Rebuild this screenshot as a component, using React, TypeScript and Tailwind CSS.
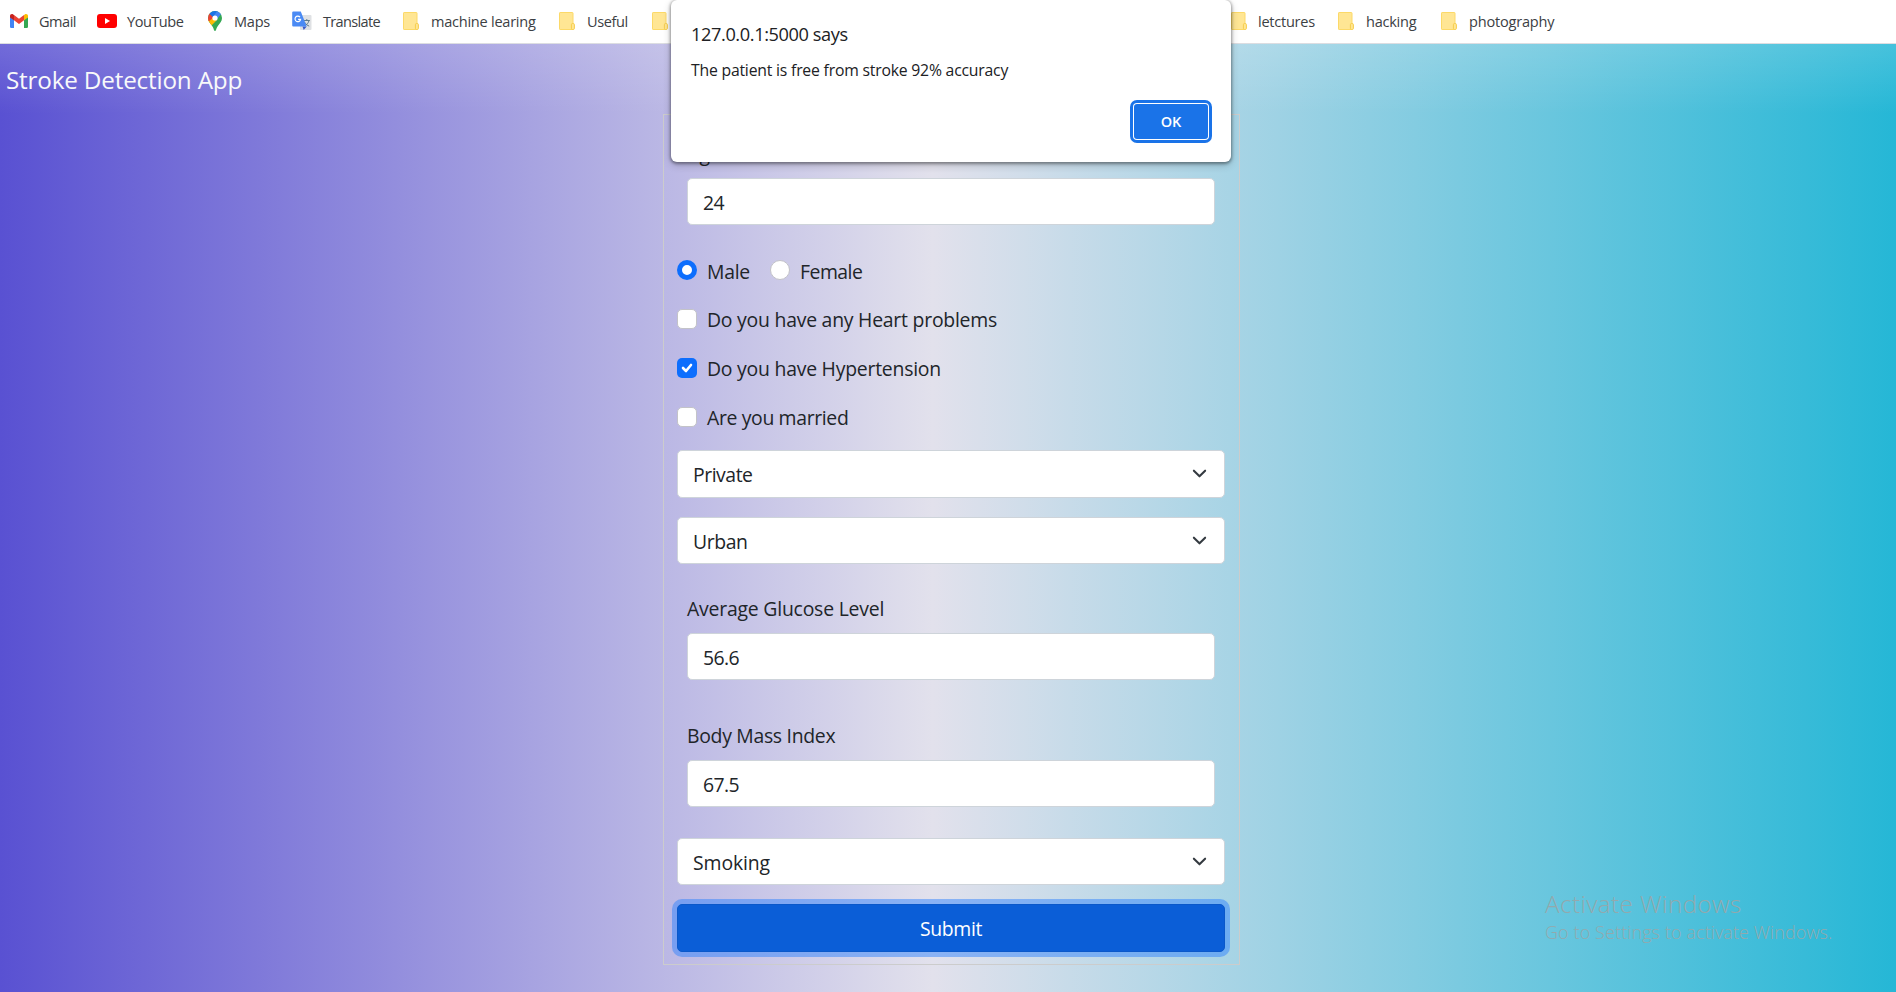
import type { ReactNode } from "react";

const GmailIcon = () => (
  <svg viewBox="0 0 18 14" className="h-[14px] w-[18px]">
    <path fill="#4285f4" d="M0 2.2 4 5.2V14H1.2A1.2 1.2 0 0 1 0 12.8Z" />
    <path fill="#34a853" d="M18 2.2 14 5.2V14h2.8a1.2 1.2 0 0 0 1.2-1.2Z" />
    <path fill="#ea4335" d="M4 1 9 4.8 14 1V6.3L9 10 4 6.3Z" />
    <path fill="#c5221f" d="M0 1.9C0 .2 1.9-.5 3.2.4L4 1V6.3L0 3.4Z" />
    <path fill="#fbbc04" d="M18 1.9C18 .2 16.1-.5 14.8.4L14 1V6.3L18 3.4Z" />
  </svg>
);

const YouTubeIcon = () => (
  <svg viewBox="0 0 20 14" className="h-[14px] w-[20px]">
    <rect width="20" height="14" rx="3" fill="#f00" />
    <path d="M8 4.1v5.8L13 7Z" fill="#fff" />
  </svg>
);

const MapsIcon = () => (
  <svg viewBox="0 0 14 20" className="h-[20px] w-[14px]">
    <defs>
      <clipPath id="pin">
        <path d="M7 0a7 7 0 0 1 7 7c0 3.3-2 5-3.8 7.4C8.6 16.600 8.300 18 7.900 19.300 7.600 20.200 6.400 20.200 6.100 19.300 5.700 18 5.400 16.600 3.800 14.400 2 12 0 10.300 0 7a7 7 0 0 1 7-7Z" />
      </clipPath>
    </defs>
    <g clipPath="url(#pin)">
      <rect width="14" height="20" fill="#34a853" />
      <path d="M-1 9 5 5 9.500 8.500 3 15Z" fill="#fbbc04" />
      <path d="M-1 10V1.500L1.700 2.500 6 6 0.800 10.500Z" fill="#ea4335" />
      <path d="M1.500 2.700 4-1h6.500L9.500 .5 4.800 6Z" fill="#1a73e8" />
      <path d="M4.800 6 10-1 15 4 12.900 3.300 8 9.500Z" fill="#4285f4" />
    </g>
    <circle cx="7" cy="7" r="2.600" fill="#fff" />
  </svg>
);

const TranslateIcon = () => (
  <svg viewBox="0 0 20 20" className="h-[20px] w-[20px]">
    <rect x="8" y="4" width="11.500" height="15" rx="1" fill="#dfe1e4" />
    <path d="M11.800 9.500h6M14.800 8v1.500M17 9.500c-.6 2.600-2.300 4.300-4 5.300M13 11.500c.9 1.900 2.600 3 4.200 3.600" stroke="#607d8b" strokeWidth="1" fill="none" />
    <path d="M10.500 15.500h4.200L11.700 19Z" fill="#3a5bc7" />
    <path d="M1.200.6h7.600l5.900 15H1.200A1 1 0 0 1 .2 14.600v-13a1 1 0 0 1 1-1Z" fill="#4a8af4" />
    <path d="M8 6.100A2.800 2.800 0 1 0 8.600 8.400H6.100" stroke="#fff" strokeWidth="1.200" fill="none" />
  </svg>
);

const FolderIcon = () => (
  <svg viewBox="0 0 16 18" className="h-[18px] w-[16px]">
    <rect x=".5" y=".5" width="13.500" height="17" rx=".6" fill="#ffe694" stroke="#fcd968" />
    <rect x="12.400" y="11.500" width="3" height="6" rx="1.200" fill="#ffe694" stroke="#f6cd4c" />
  </svg>
);

function Bookmark({ icon, gap, children, className }: { icon: ReactNode; gap: string; children?: ReactNode; className: string }) {
  return (
    <div className={`flex h-full shrink-0 items-center text-[14.55px] whitespace-nowrap text-[#3c4043] ${gap} ${className}`}>
      {icon}
      <span className="mt-px">{children}</span>
    </div>
  );
}

function Check({ checked, className, children }: { checked?: boolean; className: string; children: ReactNode }) {
  return (
    <label className="flex h-[30px] items-start gap-[10px]">
      {checked ? (
        <svg viewBox="0 0 20 20" className="size-[20px] rounded-[5px] bg-[#0d6efd]">
          <path d="m6 10 3 3 5-6" fill="none" stroke="#fff" strokeWidth="2.600" strokeLinecap="round" strokeLinejoin="round" />
        </svg>
      ) : (
        <span className="size-[20px] rounded-[5px] border border-[#c3c3c8] bg-white" />
      )}
      <span className={`-mt-[4px] leading-[30px] ${className}`}>{children}</span>
    </label>
  );
}

function Select({ className, children }: { className: string; children: ReactNode }) {
  return (
    <div className={`flex w-[548px] items-center justify-between rounded-[5px] border border-[#ced4da] bg-white pr-[17px] pl-[15px] ${className}`}>
      <span className="pt-[2px]">{children}</span>
      <svg viewBox="0 0 16 16" className="mb-px size-[15px]">
        <path d="m2 5 6 6 6-6" fill="none" stroke="#343a40" strokeWidth="2.200" strokeLinecap="round" strokeLinejoin="round" />
      </svg>
    </div>
  );
}

function Field({ label, value, className, labelClass }: { label: string; value: string; className: string; labelClass: string }) {
  return (
    <div className={`ml-[10px] w-[528px] ${className}`}>
      <div className={`h-[30px] leading-[32px] ${labelClass}`}>{label}</div>
      <div className="mt-[10px] flex h-[47px] items-center rounded-[5px] border border-[#ced4da] bg-white px-[15px] pt-[2px] tracking-[-0.55px]">{value}</div>
    </div>
  );
}

export default function App() {
  return (
    <div className="relative h-[992px] w-[1896px] overflow-hidden bg-[linear-gradient(90deg,#5951d2_0%,#e2e1ec_49.200%,#25b7d6_100%)] font-['Open_Sans','Noto_Sans',sans-serif] text-[19.4px] text-[#212529]">
      <header className="flex h-[44px] items-center border-b border-[#dcdde1] bg-white pb-px">
        <Bookmark icon={<GmailIcon />} gap="gap-[11px]" className="ml-[10px] w-[87px] tracking-[-0.5px]">Gmail</Bookmark>
        <Bookmark icon={<YouTubeIcon />} gap="gap-[10px]" className="w-[111px] tracking-[-0.5px]">YouTube</Bookmark>
        <Bookmark icon={<MapsIcon />} gap="gap-[12px]" className="w-[84px] tracking-[-0.27px]">Maps</Bookmark>
        <Bookmark icon={<TranslateIcon />} gap="gap-[11px]" className="w-[111px] tracking-[-0.67px]">Translate</Bookmark>
        <Bookmark icon={<FolderIcon />} gap="gap-[12px]" className="w-[156px] tracking-[-0.25px]">machine learing</Bookmark>
        <Bookmark icon={<FolderIcon />} gap="gap-[12px]" className="w-[93px] tracking-[-0.4px]">Useful</Bookmark>
        <Bookmark icon={<FolderIcon />} gap="gap-0" className="w-[579px]" />
        <Bookmark icon={<FolderIcon />} gap="gap-[11px]" className="w-[107px] tracking-[-0.25px]">letctures</Bookmark>
        <Bookmark icon={<FolderIcon />} gap="gap-[12px]" className="w-[103px] tracking-[-0.25px]">hacking</Bookmark>
        <Bookmark icon={<FolderIcon />} gap="gap-[12px]" className="tracking-[-0.2px]">photography</Bookmark>
      </header>

      <nav className="flex h-[70px] items-center bg-[linear-gradient(180deg,rgba(255,255,255,0.15),rgba(255,255,255,0))] pt-[2px] pl-[6px]">
        <h1 className="text-[24.25px] tracking-[-0.18px] text-[#f8f9fa]">Stroke Detection App</h1>
      </nav>

      <form className="ml-[663px] flex h-[851px] w-[577px] flex-col border border-[#cccccc] pl-[13px]">
        <Field label="Age" value="24" className="mt-[23px]" labelClass="tracking-[0.3px]" />
        <div className="mt-[35px] flex gap-[20px]">
          <label className="flex h-[30px] gap-[10px]">
            <span className="size-[20px] rounded-full border-[5.500px] border-[#0d6efd] bg-white" />
            <span className="-mt-[4px] w-[43px] leading-[31px] tracking-[-0.27px]">Male</span>
          </label>
          <label className="flex h-[30px] gap-[10px]">
            <span className="size-[20px] rounded-full border border-[#c3c3c8] bg-white" />
            <span className="-mt-[4px] leading-[31px] tracking-[-0.5px]">Female</span>
          </label>
        </div>
        <div className="mt-[19px] flex flex-col gap-[19px]">
          <Check className="tracking-[-0.23px]">Do you have any Heart problems</Check>
          <Check checked className="tracking-[-0.23px]">Do you have Hypertension</Check>
          <Check className="tracking-[-0.35px]">Are you married</Check>
        </div>
        <Select className="mt-[13px] h-[48px] tracking-[-0.46px]">Private</Select>
        <Select className="mt-[19px] h-[47px] tracking-[-0.4px]">Urban</Select>
        <Field label="Average Glucose Level" value="56.6" className="mt-[29px]" labelClass="tracking-[-0.21px]" />
        <Field label="Body Mass Index" value="67.5" className="mt-[40px]" labelClass="tracking-[-0.3px]" />
        <Select className="mt-[31px] h-[47px] tracking-[-0.1px]">Smoking</Select>
        <button type="button" className="mt-[19px] h-[48px] w-[548px] rounded-[5px] border border-[#0a58ca] bg-[#0b5ed7] pt-[2px] tracking-[-0.37px] text-white shadow-[0_0_0_5px_rgba(49,132,253,0.5)]">Submit</button>
      </form>

      <div className="absolute top-0 left-[671px] flex h-[162px] w-[560px] flex-col rounded-[6px] bg-white pl-[20px] text-[#202124] shadow-[0_1px_3px_1px_rgba(0,0,0,0.35),0_3px_8px_rgba(0,0,0,0.2)]">
        <div className="mt-[19px] h-[30px] text-[18.2px] leading-[30px] tracking-[-0.4px]">127.0.0.1:5000 says</div>
        <div className="mt-[8px] h-[26px] text-[15.75px] leading-[26px] tracking-[-0.2px]">The patient is free from stroke 92% accuracy</div>
        <button type="button" className="mt-[21px] mr-[23px] flex h-[35px] w-[74px] items-center justify-center self-end rounded-[3px] bg-[#1a73e8] text-[14.5px] font-semibold text-white shadow-[0_0_0_1px_#fff,0_0_0_4px_#1a73e8]">OK</button>
      </div>

      <div className="absolute top-[887px] left-[1545px] text-[#93a9ad]">
        <div className="h-[32px] text-[24.25px] leading-[33px] font-light tracking-[0.4px]">Activate Windows</div>
        <div className="h-[26px] text-[18px] leading-[27px] font-light tracking-[0.1px]">Go to Settings to activate Windows.</div>
      </div>
    </div>
  );
}
